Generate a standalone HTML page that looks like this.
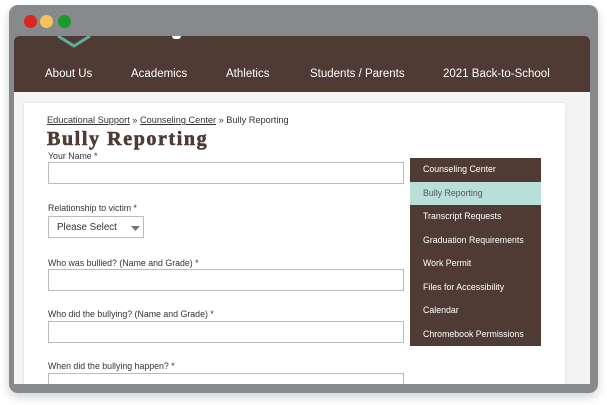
<!DOCTYPE html>
<html><head><style>
*{margin:0;padding:0;box-sizing:border-box}
body{width:607px;height:405px;background:#fff;position:relative;overflow:hidden;font-family:"Liberation Sans",sans-serif}
.frame{position:absolute;left:9px;top:5px;width:589px;height:388px;background:#878a8c;border-radius:9px;box-shadow:0 4px 10px rgba(0,0,0,.18)}
.dot{position:absolute;top:10px;width:13px;height:13px;border-radius:50%}
.inner{position:absolute;left:14px;top:36px;width:576px;height:348px;background:#f4f4f4;overflow:hidden;border-radius:5px 5px 0 0}
.hdr{position:absolute;left:0;top:0;width:576px;height:56px;background:#4f3b34}
.nav{position:absolute;top:32px;color:#fff;font-size:11.5px}
.card{position:absolute;left:10px;top:67px;width:541px;height:300px;background:#fff;box-shadow:0 0 3px rgba(0,0,0,.1)}
.t{position:absolute;font-size:8.8px;color:#333}
.in{position:absolute;left:34px;width:356px;height:22px;border:1px solid #bbb;background:#fff}
.side{position:absolute;left:396px;top:122px;width:131px;height:188px;background:#4f3b34}
.side div{height:23.5px;line-height:23.5px;padding-left:13px;color:#fff;font-size:8.8px}
</style></head><body>
<div class="frame">
<div class="dot" style="left:15px;background:#d9261f"></div>
<div class="dot" style="left:31px;background:#f9c25a"></div>
<div class="dot" style="left:49px;background:#1a9a2a"></div>
</div>
<div class="inner">
<div class="hdr">
<svg style="position:absolute;left:40px;top:0" width="45" height="12"><polyline points="4,0 20,10 36,0" fill="none" stroke="#5fae9a" stroke-width="3"/></svg>
<div style="position:absolute;left:158px;top:0;width:9px;height:3px;background:#fff;border-radius:0 0 4px 4px"></div>
<div class="nav" style="left:31px">About Us</div>
<div class="nav" style="left:117px">Academics</div>
<div class="nav" style="left:212px">Athletics</div>
<div class="nav" style="left:296px">Students / Parents</div>
<div class="nav" style="left:429px">2021 Back-to-School</div>
</div>
<div class="card"></div>
<div class="t" style="left:33px;top:79px;font-size:9.2px"><u>Educational Support</u> » <u>Counseling Center</u> » Bully Reporting</div>
<div style="position:absolute;left:33px;top:92px;font-family:'Liberation Serif',serif;font-weight:900;font-size:20px;color:#4f3b34;letter-spacing:1.6px;-webkit-text-stroke:0.6px #4f3b34">Bully Reporting</div>
<div class="t" style="left:34px;top:115px">Your Name *</div>
<div class="in" style="top:126px"></div>
<div class="t" style="left:34px;top:167px">Relationship to victim *</div>
<div class="in" style="top:180px;width:96px;font-size:9.8px;color:#333;padding:5px 0 0 8px">Please Select<svg style="position:absolute;right:3px;top:9px" width="9" height="5"><polygon points="0,0 9,0 4.5,5" fill="#777"/></svg></div>
<div class="t" style="left:34px;top:222px">Who was bullied? (Name and Grade) *</div>
<div class="in" style="top:233px"></div>
<div class="t" style="left:34px;top:273px">Who did the bullying? (Name and Grade) *</div>
<div class="in" style="top:285px"></div>
<div class="t" style="left:34px;top:325px">When did the bullying happen? *</div>
<div class="in" style="top:337px"></div>
<div class="side">
<div>Counseling Center</div>
<div style="background:#b9e0d8;color:#555">Bully Reporting</div>
<div>Transcript Requests</div>
<div>Graduation Requirements</div>
<div>Work Permit</div>
<div>Files for Accessibility</div>
<div>Calendar</div>
<div>Chromebook Permissions</div>
</div>
</div>
</body></html>
